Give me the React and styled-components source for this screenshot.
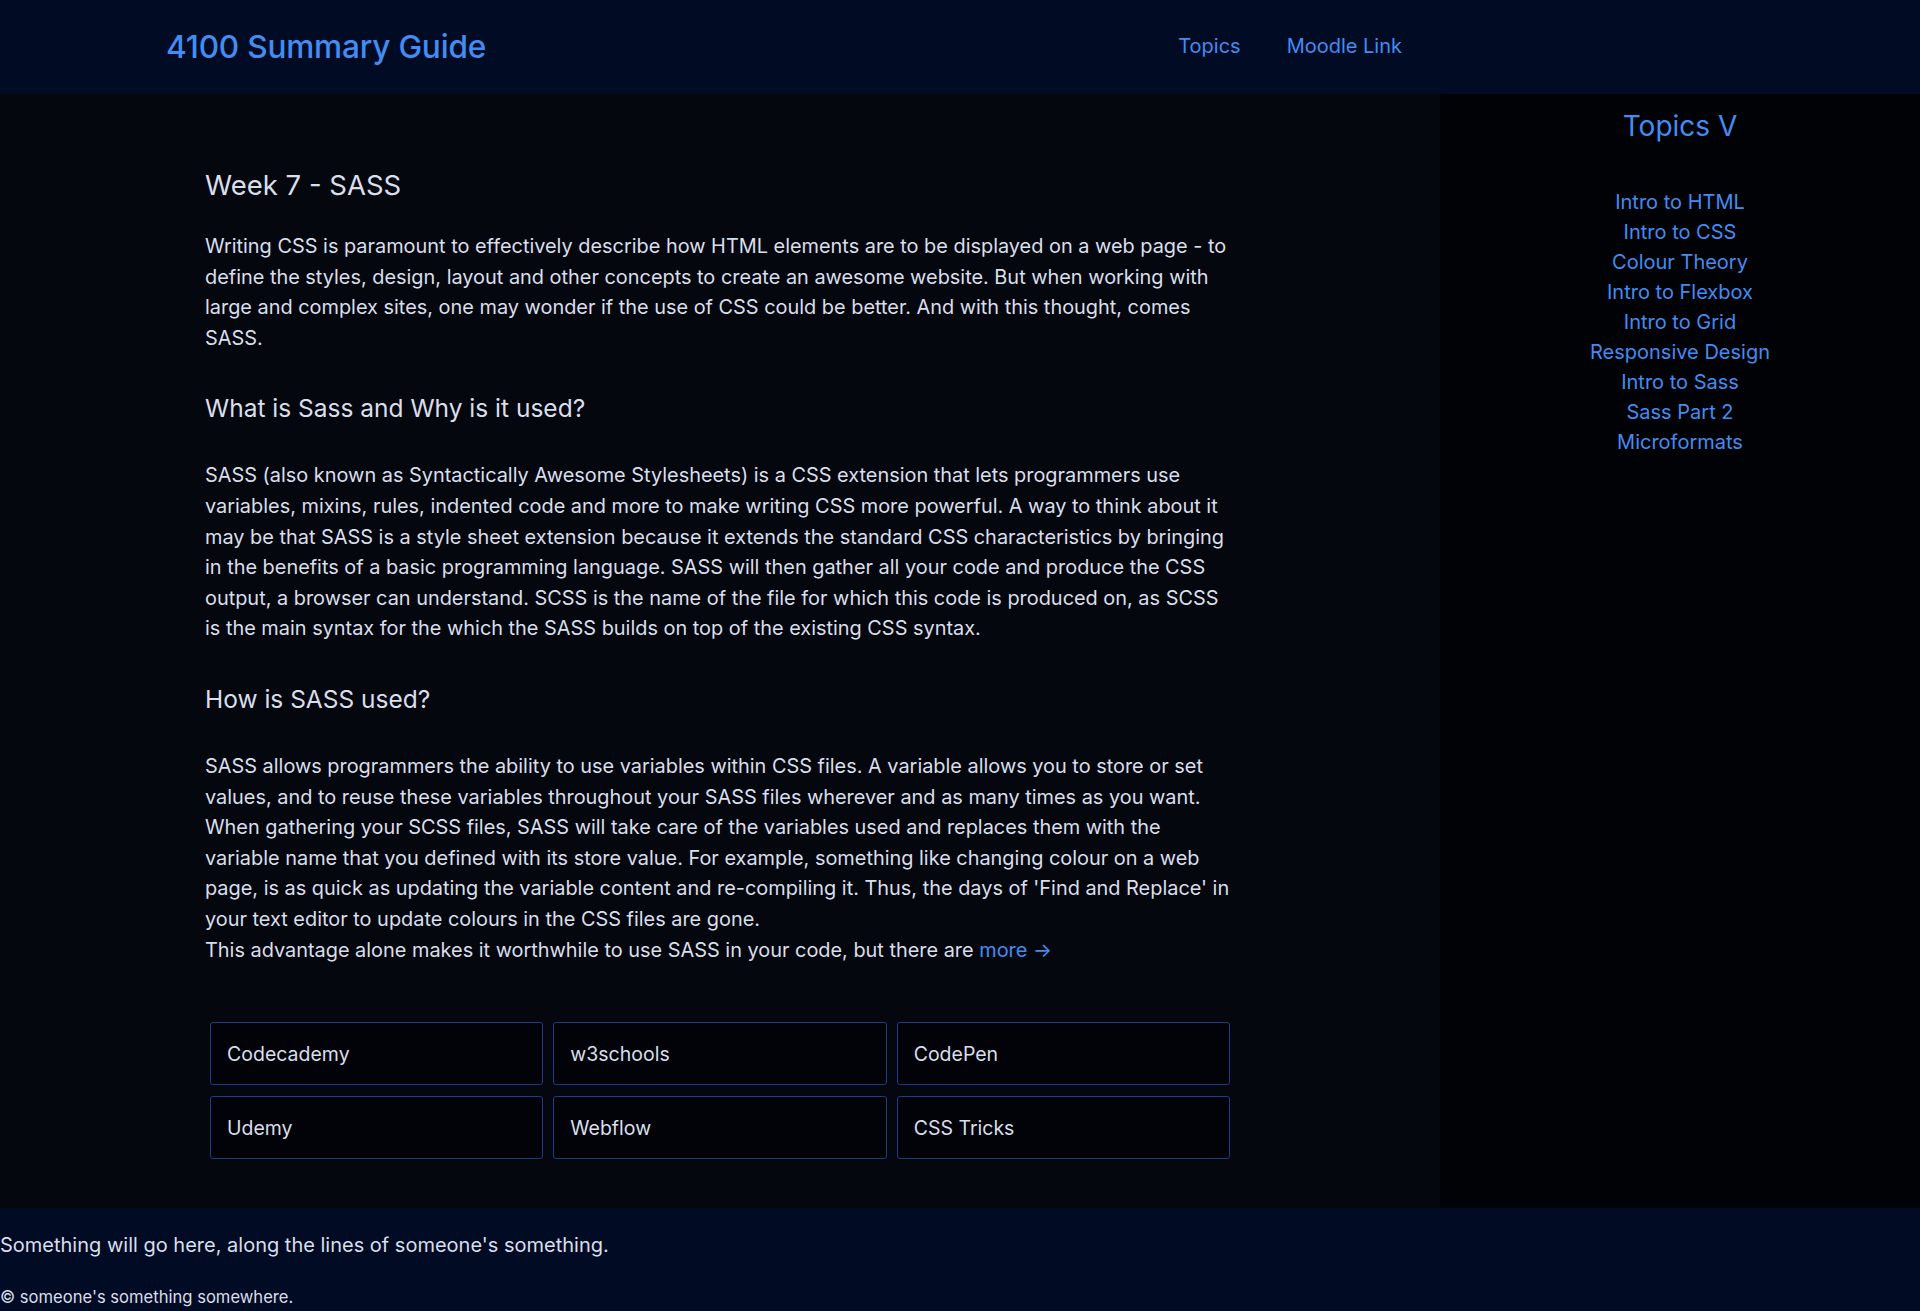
import React from 'react';
import styled, { createGlobalStyle } from 'styled-components';

const GlobalStyle = createGlobalStyle`
    * {
        box-sizing: border-box;
    }
    body {
        margin: 0;
        background: #05070f;
        font-family: 'Inter', 'Noto Sans', sans-serif;
        color: #d9dfeb;
    }
    a {
        text-decoration: none;
    }
`;

const topics = [
    'Intro to HTML',
    'Intro to CSS',
    'Colour Theory',
    'Intro to Flexbox',
    'Intro to Grid',
    'Responsive Design',
    'Intro to Sass',
    'Sass Part 2',
    'Microformats',
];

const resources = ['Codecademy', 'w3schools', 'CodePen', 'Udemy', 'Webflow', 'CSS Tricks'];

const App = () => {
    return (
        <>
            <GlobalStyle />
            <Header>
                <Brand href="#">4100 Summary Guide</Brand>
                <Nav>
                    <NavLink href="#">Topics</NavLink>
                    <NavLink href="#">Moodle Link</NavLink>
                </Nav>
            </Header>
            <Layout>
                <Main>
                    <Title>Week 7 - SASS</Title>
                    <Text>
                        Writing CSS is paramount to effectively describe how HTML elements are to be displayed on a web page - to
                        define the styles, design, layout and other concepts to create an awesome website. But when working with
                        large and complex sites, one may wonder if the use of CSS could be better. And with this thought, comes
                        SASS.
                    </Text>
                    <SubTitle>What is Sass and Why is it used?</SubTitle>
                    <Text>
                        SASS (also known as Syntactically Awesome Stylesheets) is a CSS extension that lets programmers use
                        variables, mixins, rules, indented code and more to make writing CSS more powerful. A way to think about it
                        may be that SASS is a style sheet extension because it extends the standard CSS characteristics by
                        bringing in the benefits of a basic programming language. SASS will then gather all your code and produce
                        the CSS output, a browser can understand. SCSS is the name of the file for which this code is produced on,
                        as SCSS is the main syntax for the which the SASS builds on top of the existing CSS syntax.
                    </Text>
                    <SubTitle>How is SASS used?</SubTitle>
                    <Text>
                        SASS allows programmers the ability to use variables within CSS files. A variable allows you to store or set
                        values, and to reuse these variables throughout your SASS files wherever and as many times as you want.
                        When gathering your SCSS files, SASS will take care of the variables used and replaces them with the
                        variable name that you defined with its store value. For example, something like changing colour on a web
                        page, is as quick as updating the variable content and re-compiling it. Thus, the days of 'Find and Replace' in
                        your text editor to update colours in the CSS files are gone.
                        <br />
                        This advantage alone makes it worthwhile to use SASS in your code, but there are{' '}
                        <MoreLink href="#">more →</MoreLink>
                    </Text>
                    <CardGrid>
                        {resources.map(name => (
                            <Card key={name} href="#">
                                {name}
                            </Card>
                        ))}
                    </CardGrid>
                </Main>
                <Aside>
                    <AsideTitle>Topics V</AsideTitle>
                    <TopicList>
                        {topics.map(t => (
                            <li key={t}>
                                <TopicLink href="#">{t}</TopicLink>
                            </li>
                        ))}
                    </TopicList>
                </Aside>
            </Layout>
            <Footer>
                <FooterText>Something will go here, along the lines of someone's something.</FooterText>
                <Copyright>© someone's something somewhere.</Copyright>
            </Footer>
        </>
    );
};

const Header = styled.header`
    height: 94px;
    background: #020b24;
    display: flex;
    align-items: center;
    padding: 0 517px 2px 166px;
`;

const Brand = styled.a`
    font-size: 31.6px;
    font-weight: 500;
    color: #438cf2;
    letter-spacing: -0.2px;
`;

const Nav = styled.nav`
    margin-left: auto;
    display: flex;
    gap: 46px;
    padding-right: 1px;
`;

const NavLink = styled.a`
    font-size: 20px;
    color: #438cf2;
`;

const Layout = styled.div`
    display: grid;
    grid-template-columns: 1440px 480px;
`;

const Main = styled.main`
    background: #05070f;
    padding: 73px 205px 49px;
`;

const Title = styled.h1`
    margin: 0 0 28px;
    font-size: 27.5px;
    font-weight: 400;
    line-height: 36px;
    color: #d9dfeb;
`;

const SubTitle = styled.h2`
    margin: 39px 0 36px;
    font-size: 24.5px;
    font-weight: 400;
    line-height: 32px;
    color: #d9dfeb;
`;

const Text = styled.p`
    margin: 0;
    font-size: 19.9px;
    line-height: 30.6px;
`;

const MoreLink = styled.a`
    color: #438cf2;
`;

const CardGrid = styled.div`
    margin-top: 57px;
    padding: 0 5px;
    display: grid;
    grid-template-columns: repeat(3, 1fr);
    gap: 11px 10px;
`;

const Card = styled.a`
    display: flex;
    align-items: center;
    height: 63px;
    padding: 0 16px;
    background: #020308;
    border: 1px solid #1e3a8a;
    border-radius: 3px;
    color: #d9dfeb;
    font-size: 19.5px;
`;

const Aside = styled.aside`
    background: #010205;
    padding-top: 14px;
    text-align: center;
`;

const AsideTitle = styled.h2`
    margin: 0 0 43px;
    font-size: 28px;
    font-weight: 400;
    line-height: 36px;
    color: #438cf2;
`;

const TopicList = styled.ul`
    list-style: none;
    margin: 0;
    padding: 0;
    font-size: 20px;
    li {
        line-height: 30px;
        height: 30px;
    }
`;

const TopicLink = styled.a`
    font-size: 20px;
    color: #438cf2;
`;

const Footer = styled.footer`
    background: #020b24;
    padding: 22px 0 3px;
`;

const FooterText = styled.p`
    margin: 0 0 25px;
    font-size: 20px;
    line-height: 30px;
`;

const Copyright = styled.p`
    margin: 0;
    font-size: 16.6px;
    line-height: 24px;
`;

export default App;
